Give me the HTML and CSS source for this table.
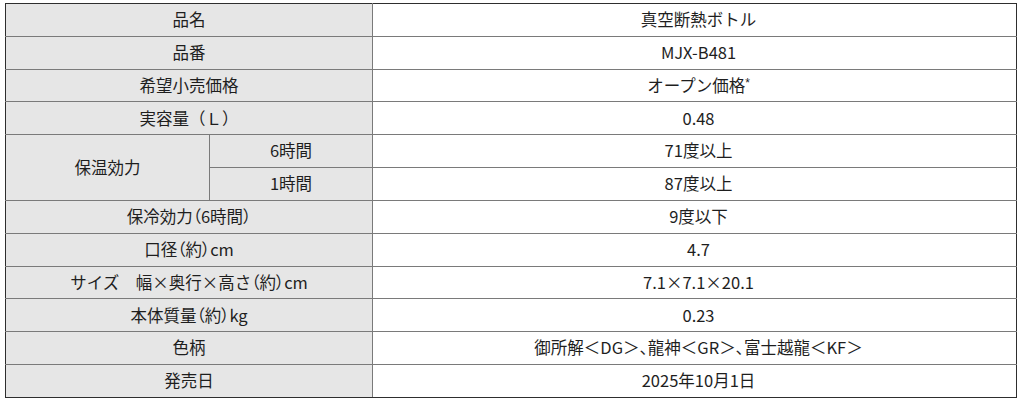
FILE: index.html
```html
<!DOCTYPE html>
<html lang="ja">
<head>
<meta charset="utf-8">
<link rel="stylesheet" href="styles.css">
</head>
<body>
<table class="spec">
  <colgroup>
    <col class="c1"><col class="c2"><col class="c3">
  </colgroup>
  <tbody>
    <tr><th colspan="2">品名</th><td>真空断熱ボトル</td></tr>
    <tr><th colspan="2">品番</th><td>MJX-B481</td></tr>
    <tr><th colspan="2">希望小売価格</th><td>オープン価格<sup>*</sup></td></tr>
    <tr><th colspan="2">実容量（Ｌ）</th><td>0.48</td></tr>
    <tr><th rowspan="2">保温効力</th><th class="sub">6時間</th><td>71度以上</td></tr>
    <tr><th class="sub">1時間</th><td>87度以上</td></tr>
    <tr><th colspan="2">保冷効力<span class="p">（</span>6時間<span class="p">）</span></th><td>9度以下</td></tr>
    <tr><th colspan="2">口径<span class="p">（</span>約<span class="p">）</span>cm</th><td>4.7</td></tr>
    <tr><th colspan="2">サイズ　幅×奥行×高さ<span class="p">（</span>約<span class="p">）</span>cm</th><td>7.1×7.1×20.1</td></tr>
    <tr><th colspan="2">本体質量<span class="p">（</span>約<span class="p">）</span>kg</th><td>0.23</td></tr>
    <tr><th colspan="2">色柄</th><td>御所解＜DG＞<span class="p">、</span>龍神＜GR＞<span class="p">、</span>富士越龍＜KF＞</td></tr>
    <tr><th colspan="2">発売日</th><td>2025年10月1日</td></tr>
  </tbody>
</table>
</body>
</html>
```
FILE: styles.css
```css
html, body {
  margin: 0;
  padding: 0;
  background: #ffffff;
}
body {
  padding: 3px 7px 0 5px;
  font-family: "Noto Sans CJK JP", "Noto Sans", sans-serif;
  color: #1e1e1e;
}
.spec {
  width: 1012px;
  height: 395px;
  border-collapse: collapse;
  table-layout: fixed;
  border: 1px solid #2e2e2e;
  font-size: 16.5px;
  line-height: 1;
}
.c1 { width: 204px; }
.c2 { width: 163px; }
.c3 { width: auto; }
.spec th, .spec td {
  border: 1px solid #7a7a7a;
  text-align: center;
  vertical-align: middle;
  padding: 0 0 1px 0;
  font-weight: 400;
  white-space: nowrap;
}
.spec th {
  background: #e6e6e6;
}
.spec td {
  background: #ffffff;
  padding-left: 8px;
}
.spec tr:first-child th, .spec tr:first-child td { border-top-color: #2e2e2e; }
.spec tr:last-child th, .spec tr:last-child td { border-bottom-color: #2e2e2e; }
.spec th:first-child { border-left-color: #2e2e2e; }
.spec td:last-child { border-right-color: #2e2e2e; }
.p {
  font-feature-settings: "palt" 1;
}
.spec sup {
  font-family: "Liberation Sans", sans-serif;
  font-size: 12px;
  vertical-align: 5px;
  line-height: 0;
}
```
